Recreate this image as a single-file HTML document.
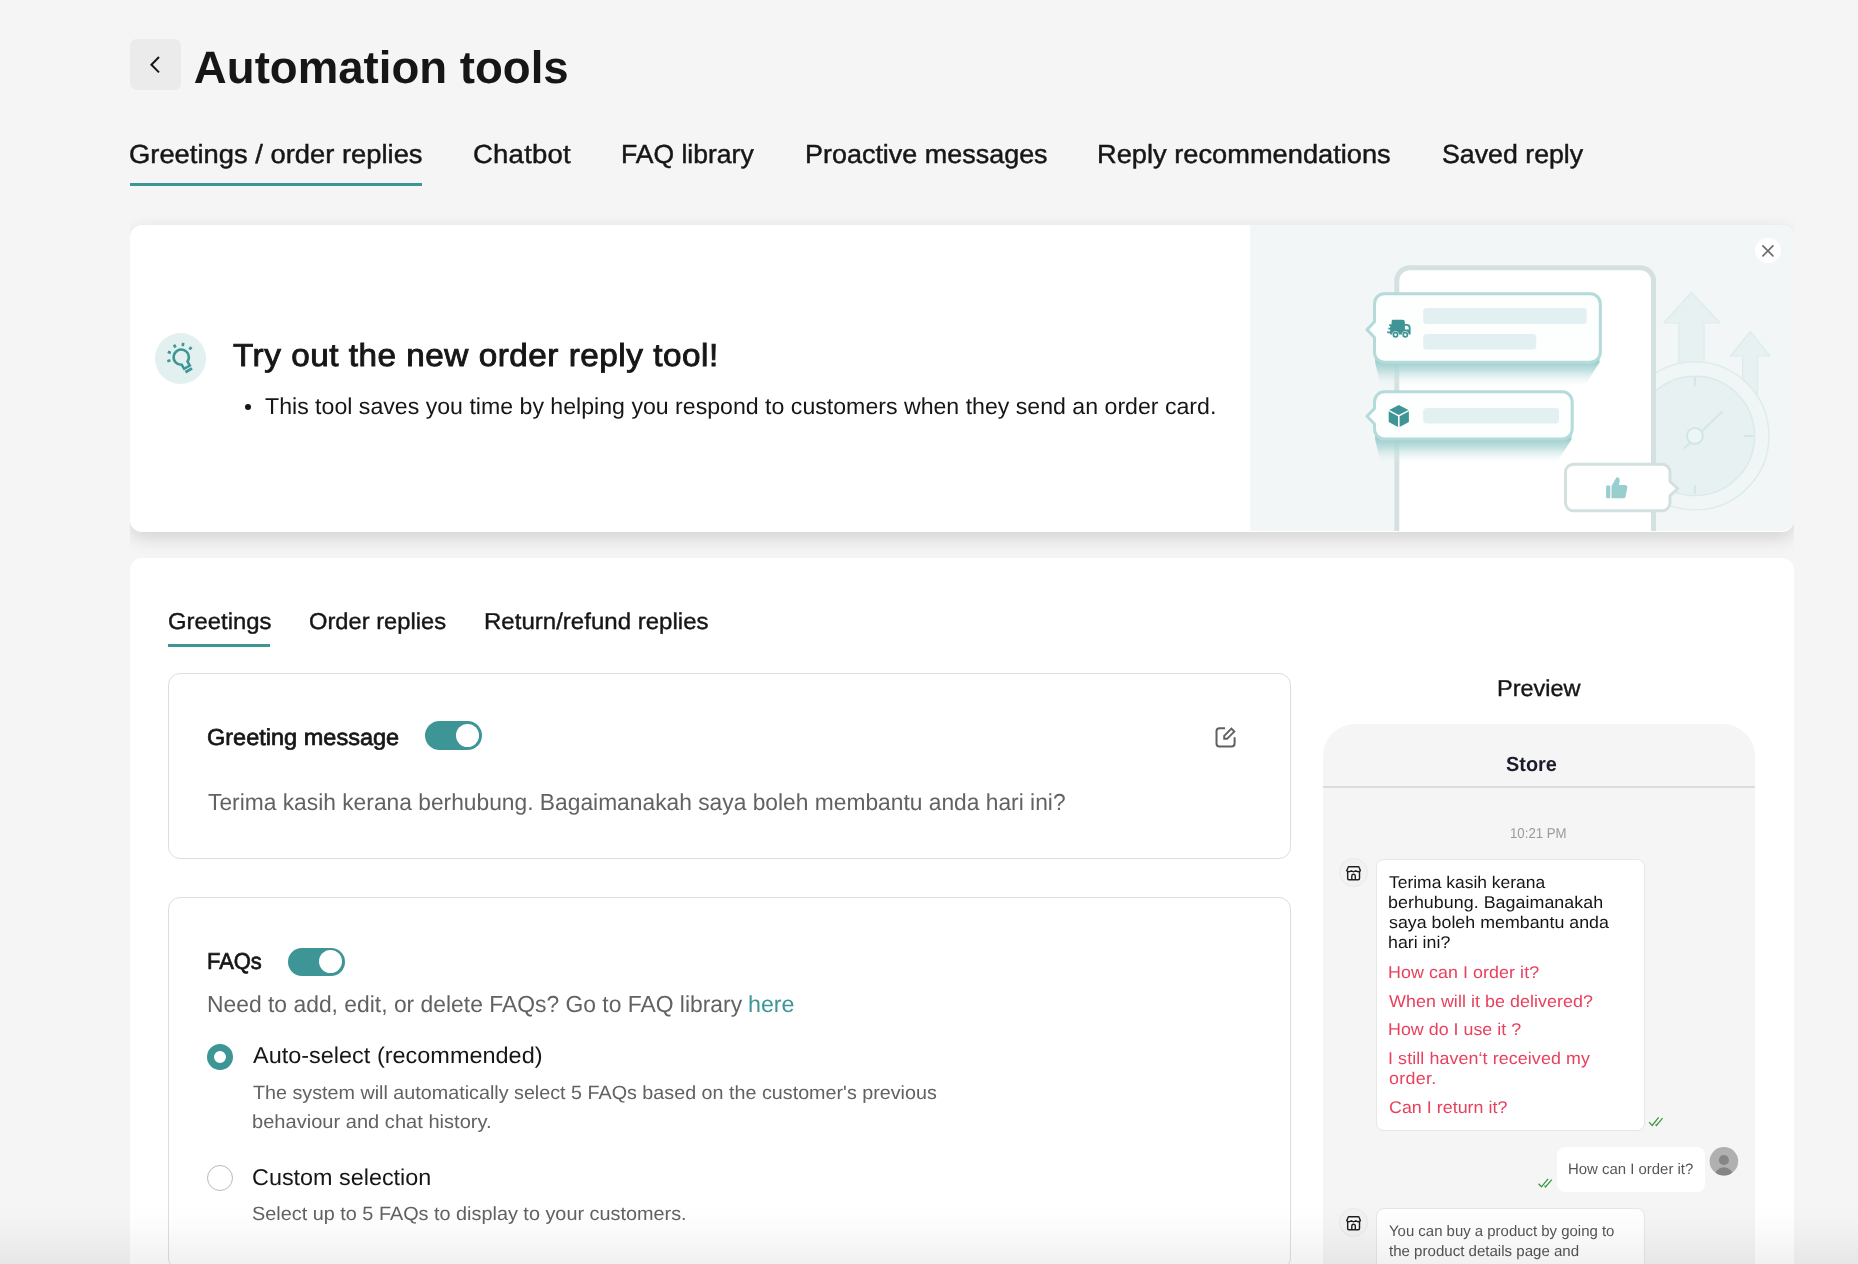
<!DOCTYPE html>
<html lang="en">
<head>
<meta charset="utf-8">
<title>Automation tools</title>
<style>
*{box-sizing:border-box;margin:0;padding:0}
html,body{width:1858px;height:1264px;overflow:hidden;background:#f5f5f5}
body{font-family:"Liberation Sans",sans-serif;color:#161616;position:relative}
.abs{position:absolute}
.t{position:absolute;white-space:nowrap;line-height:1;transform-origin:0 50%;text-rendering:geometricPrecision}
#txt{position:absolute;left:0;top:0;width:1858px;height:1264px;will-change:transform}
#back{left:130px;top:39px;width:51px;height:51px;background:#ebebeb;border-radius:7px}
.line{background:#3d9595;height:3px}
#banner{left:130px;top:225px;width:1664px;height:306px;background:#fff;border-radius:12px;box-shadow:0 6px 14px rgba(0,0,0,.07)}
#clip{left:130px;top:225px;width:1664px;height:306px;border-radius:12px;overflow:hidden}
#main{left:130px;top:558px;width:1664px;height:760px;background:#fff;border-radius:12px}
.card{border:1px solid #dedede;border-radius:12px;background:#fff}
.toggle{width:57px;height:28.7px;border-radius:15px;background:#3d9595}
.toggle i{position:absolute;right:2.9px;top:2.9px;width:22.9px;height:22.9px;border-radius:50%;background:#fff}
.bub{background:#fff;border-radius:8px}
.av{width:29.2px;height:29.2px;border-radius:50%;background:#f2f2f2;border:1px solid #e9e9e9}
</style>
</head>
<body>
<div class="abs" id="back"><svg width="51" height="51" viewBox="0 0 51 51"><path d="M29 18 L21.4 25.7 L29 33.4" fill="none" stroke="#161616" stroke-width="2"/></svg></div>
<div class="abs line" style="left:130px;top:182.7px;width:292px;height:3.5px"></div>

<div class="abs" style="left:130px;top:190px;width:1664px;height:400px;overflow:hidden"><div class="abs" style="left:0;top:35px;width:1664px;height:306.8px;background:#fff;border-radius:12px;box-shadow:0 6px 18px rgba(0,0,0,.14)"></div></div>
<div class="abs" id="clip" style="left:0;top:0;width:1858px;height:1264px;border-radius:0;clip-path:inset(225px 64px 733px 130px round 12px)">
<svg class="abs" style="left:1250px;top:225px" width="544" height="306" viewBox="1250 225 544 306">
<defs>
<linearGradient id="sh1" gradientUnits="userSpaceOnUse" x1="0" y1="362.5" x2="0" y2="386"><stop offset="0" stop-color="#9fcfcf"/><stop offset=".35" stop-color="#b4d9d9" stop-opacity=".78"/><stop offset="1" stop-color="#e6f3f3" stop-opacity="0"/></linearGradient>
<linearGradient id="sh2" gradientUnits="userSpaceOnUse" x1="0" y1="439.5" x2="0" y2="463"><stop offset="0" stop-color="#9fcfcf"/><stop offset=".35" stop-color="#b4d9d9" stop-opacity=".78"/><stop offset="1" stop-color="#e6f3f3" stop-opacity="0"/></linearGradient>
</defs>
<rect x="1250" y="225" width="544" height="306" fill="#f2f6f7"/>
<!-- arrows -->
<g fill="#e8f1f2" stroke="#dcebeb" stroke-width="1.2" stroke-linejoin="round">
<path d="M1691.4 292.4 L1720.1 323 L1704 323 L1704 380 L1678.8 380 L1678.8 323 L1663.9 323 Z"/>
<path d="M1750.4 331.5 L1770 356 L1757.5 356 L1757.5 420 L1742.6 420 L1742.6 356 L1730.5 356 Z"/>
</g>
<!-- clock -->
<circle cx="1694.9" cy="435.9" r="74" fill="#f0f5f6" stroke="#dcebeb" stroke-width="1.4"/>
<circle cx="1694.9" cy="435.9" r="59.7" fill="#e8f1f2" stroke="#d9eaea" stroke-width="1.4"/>
<g stroke="#d3e7e7" stroke-width="2" stroke-linecap="butt">
<line x1="1694.9" y1="377" x2="1694.9" y2="386"/>
<line x1="1694.9" y1="485" x2="1694.9" y2="494"/>
<line x1="1744" y1="435.9" x2="1753.5" y2="435.9"/>
<line x1="1684.1" y1="448.5" x2="1722.4" y2="411.3"/>
</g>
<circle cx="1694.9" cy="435.9" r="8" fill="#edf6f6" stroke="#d0e6e6" stroke-width="2"/>
<!-- phone -->
<rect x="1396.8" y="267.7" width="256.7" height="300" rx="13" fill="#fff" stroke="#d5e1e1" stroke-width="5"/>
<!-- bubble 1 -->
<path d="M1375 352 L1599.5 352 L1599.5 362.5 L1584.5 386 L1380.5 386 L1375.2 362.5 Z" fill="url(#sh1)"/>
<path d="M1384.5 293.7 H1590.3 a10 10 0 0 1 10 10 V352.2 a10 10 0 0 1 -10 10 H1384.5 a10 10 0 0 1 -10 -10 V337.5 L1367 329.6 L1374.5 321.7 V303.7 a10 10 0 0 1 10 -10 Z" fill="#fdfefe" stroke="#b4dada" stroke-width="3" stroke-linejoin="round"/>
<rect x="1423.2" y="308" width="163.6" height="16" rx="3.5" fill="#e3f0f1"/>
<rect x="1423.2" y="333.9" width="113.1" height="15.7" rx="3.5" fill="#e3f0f1"/>
<!-- truck -->
<g fill="#3f9595">
<path d="M1393 319.8 H1402.5 a2.4 2.4 0 0 1 2.4 2.4 V324 H1406.6 a4 4 0 0 1 4 4 V334.6 H1408.6 a3.3 3.3 0 0 0 -6.6 0 H1398.8 a3.3 3.3 0 0 0 -6.6 0 H1390.2 V333.2 H1387.2 V331.4 H1390.2 V329.6 H1388.4 V327.8 H1390.2 V326 H1389.2 V324.2 H1391.6 V321.2 a1.4 1.4 0 0 1 1.4 -1.4 Z M1404.9 325.8 V329.6 H1408.8 V328.2 a2.4 2.4 0 0 0 -2.4 -2.4 Z" fill-rule="evenodd"/>
<circle cx="1395.5" cy="334.7" r="2.1" fill="#fff" stroke="#3f9595" stroke-width="1.7"/><circle cx="1405.3" cy="334.7" r="2.1" fill="#fff" stroke="#3f9595" stroke-width="1.7"/>
</g>
<!-- bubble 2 -->
<path d="M1375 429 L1571.5 429 L1571.5 439.5 L1556.5 463 L1380.5 463 L1375.2 439.5 Z" fill="url(#sh2)"/>
<path d="M1384.5 391.8 H1562.2 a10 10 0 0 1 10 10 V429.1 a10 10 0 0 1 -10 10 H1384.5 a10 10 0 0 1 -10 -10 V424 L1367 416.2 L1374.5 408.4 V401.8 a10 10 0 0 1 10 -10 Z" fill="#fdfefe" stroke="#b4dada" stroke-width="3" stroke-linejoin="round"/>
<rect x="1423.2" y="407.9" width="135.8" height="15.7" rx="3.5" fill="#e3f0f1"/>
<!-- box -->
<g fill="#3f9595">
<path d="M1398.8 405 L1408.4 410 L1398.8 415 L1389.2 410 Z"/>
<path d="M1388.7 411.3 L1398 416.2 V427 L1388.7 422 Z"/>
<path d="M1408.9 411.3 L1399.6 416.2 V427 L1408.9 422 Z"/>
</g>
<!-- thumb bubble -->
<path d="M1573.5 464.2 H1662 a8 8 0 0 1 8 8 V481.5 L1677.8 488.6 L1670 495.7 V502.8 a8 8 0 0 1 -8 8 H1573.5 a8 8 0 0 1 -8 -8 V472.2 a8 8 0 0 1 8 -8 Z" fill="#fff" stroke="#d3e0e0" stroke-width="3" stroke-linejoin="round"/>
<g fill="#99cece">
<rect x="1606.1" y="485.5" width="4.2" height="12.8" rx="1.3"/>
<path d="M1611.5 486 L1616 478.2 a1.6 1.6 0 0 1 2.6 -0.4 c1.2 1.3 1.4 3 .9 4.6 L1618.8 485 H1625 a2.3 2.3 0 0 1 2.3 2.8 L1625.6 496.4 a2.4 2.4 0 0 1 -2.4 1.9 H1611.5 Z"/>
</g>
</svg>

</div>
<div class="abs" style="left:1754.9px;top:237.7px;width:25.8px;height:25.8px;border-radius:50%;background:#fff"><svg width="25.8" height="25.8" viewBox="0 0 25.8 25.8" style="display:block"><path d="M7.9 7.9 L17.9 17.9 M17.9 7.9 L7.9 17.9" stroke="#6c6c6c" stroke-width="1.65" stroke-linecap="round" fill="none"/></svg></div>
<div class="abs" style="left:155px;top:333px;width:51px;height:51px;border-radius:50%;background:#e3f0f0"></div>
<svg class="abs" style="left:155px;top:333px" width="51" height="51" viewBox="155 333 51 51"><g transform="translate(181.2 357.2) rotate(-30)" fill="none" stroke="#3d9595" stroke-width="2.5">
<path d="M-3.3 11.6 V6.9 A7.6 7.6 0 1 1 3.3 6.9 V11.6 Z"/>
<path d="M-3.8 15.1 H3.8" stroke-width="2.8"/>
<path d="M-10.87 -2.71 L-13.97 -3.48 M-6.90 -8.83 L-8.87 -11.35 M0.00 -11.20 L0.00 -14.40 M6.90 -8.83 L8.87 -11.35 M10.87 -2.71 L13.97 -3.48" stroke-width="2.6"/>
</g></svg>
<div class="abs" style="left:245px;top:404px;width:6px;height:6px;border-radius:50%;background:#161616"></div>

<div class="abs" id="main"></div>
<div class="abs line" style="left:168px;top:643.8px;width:102px;height:3.1px"></div>
<div class="abs card" style="left:168px;top:673px;width:1123px;height:186px"></div>
<div class="abs card" style="left:168px;top:897px;width:1123px;height:373px"></div>
<div class="abs toggle" style="left:425px;top:721.2px"><i></i></div>
<div class="abs toggle" style="left:288px;top:947.6px"><i></i></div>
<svg class="abs" style="left:1210px;top:722px" width="32" height="32" viewBox="1210 722 32 32" fill="none" stroke="#606060" stroke-width="2"><path d="M1225 728.3 H1219.5 a3 3 0 0 0 -3 3 V743.6 a3 3 0 0 0 3 3 H1231.6 a3 3 0 0 0 3 -3 V737.3"/><path d="M1224.2 738.8 V735.9 L1231.4 728.7 L1234.3 731.6 L1227.1 738.8 Z" stroke-width="1.9" stroke-linejoin="miter"/></svg>
<div class="abs" style="left:207px;top:1043.5px;width:26px;height:26px;border-radius:50%;border:7.5px solid #3d9595;background:#fff"></div>
<div class="abs" style="left:207px;top:1165px;width:26px;height:26px;border-radius:50%;border:1px solid #b9b9b9;background:#fff"></div>

<!-- phone preview -->
<div class="abs" style="left:1323px;top:724px;width:432px;height:600px;background:#f5f5f5;border-radius:32px 32px 0 0"></div>
<div class="abs" style="left:1323px;top:786px;width:432px;height:2px;background:#dcdcdc"></div>
<div class="abs av" style="left:1338.9px;top:858.3px"></div>
<svg class="abs" style="left:1338px;top:858.0px" width="31" height="31" viewBox="1338 858 31 31" fill="none" stroke="#1f1f1f" stroke-width="1.45" stroke-linejoin="round"><path d="M1347.7 870.6 V878.5 a1.2 1.2 0 0 0 1.2 1.2 H1358.3 a1.2 1.2 0 0 0 1.2 -1.2 V870.6" fill="#fbfbfb"/><path d="M1349 866.7 H1358.2 a1 1 0 0 1 .95 .7 L1360.4 870.7 q-2.28 1.9 -4.56 0 q-2.28 1.9 -4.56 0 q-2.28 1.9 -4.56 0 L1348.05 867.4 a1 1 0 0 1 .95 -.7 Z" fill="#fbfbfb"/><path d="M1351.8 879.7 V876 a1.75 1.75 0 0 1 3.5 0 V879.7"/></svg>
<div class="abs av" style="left:1338.9px;top:1208.2px"></div>
<svg class="abs" style="left:1338px;top:1207.9px" width="31" height="31" viewBox="1338 858 31 31" fill="none" stroke="#1f1f1f" stroke-width="1.45" stroke-linejoin="round"><path d="M1347.7 870.6 V878.5 a1.2 1.2 0 0 0 1.2 1.2 H1358.3 a1.2 1.2 0 0 0 1.2 -1.2 V870.6" fill="#fbfbfb"/><path d="M1349 866.7 H1358.2 a1 1 0 0 1 .95 .7 L1360.4 870.7 q-2.28 1.9 -4.56 0 q-2.28 1.9 -4.56 0 q-2.28 1.9 -4.56 0 L1348.05 867.4 a1 1 0 0 1 .95 -.7 Z" fill="#fbfbfb"/><path d="M1351.8 879.7 V876 a1.75 1.75 0 0 1 3.5 0 V879.7"/></svg>
<div class="abs bub" style="left:1376px;top:859px;width:268.5px;height:271.5px;border:1px solid #e7e7e7"></div>
<div class="abs bub" style="left:1557.3px;top:1147px;width:148.1px;height:44.6px"></div>
<div class="abs bub" style="left:1376px;top:1208px;width:268.5px;height:100px;border:1px solid #e7e7e7"></div>
<svg class="abs" style="left:1646px;top:1114px" width="20" height="16" viewBox="1646 1114 20 16" fill="none" stroke="#3a9a3e" stroke-width="1.3"><path d="M1649.1 1122.1 L1652.2 1125.4 L1658.7 1117.3 M1655.6 1124.5 L1656.4 1125.5 L1662.6 1118.2"/></svg>
<svg class="abs" style="left:1535px;top:1175px" width="20" height="16" viewBox="1535 1175 20 16" fill="none" stroke="#3a9a3e" stroke-width="1.3"><path d="M1538.5 1183.7 L1541.5 1186.8 L1548.1 1178.8 M1544.6 1185.7 L1545.5 1187 L1551.8 1179.6"/></svg>
<svg class="abs" style="left:1709px;top:1146px" width="31" height="31" viewBox="1709 1146 31 31"><defs><clipPath id="uc"><circle cx="1723.9" cy="1161.25" r="14.3"/></clipPath></defs><circle cx="1723.9" cy="1161.25" r="14.3" fill="#b0b0b0"/><g clip-path="url(#uc)" fill="#858585"><circle cx="1723.9" cy="1160" r="5.1"/><ellipse cx="1723.9" cy="1177.3" rx="9.6" ry="10"/></g></svg>

<div id="txt">
<div class="t" style="left:193.86px;top:45.20px;font-size:45.6px;font-weight:700;">Automation tools</div>
<div class="t" style="left:129.02px;top:140.90px;font-size:26.2px;transform:scaleX(1.0450);-webkit-text-stroke:0.45px #161616;">Greetings / order replies</div>
<div class="t" style="left:473.10px;top:140.90px;font-size:26.2px;letter-spacing:0.219px;transform:scaleX(1.0500);-webkit-text-stroke:0.45px #161616;">Chatbot</div>
<div class="t" style="left:621.32px;top:140.90px;font-size:26.2px;transform:scaleX(1.0134);-webkit-text-stroke:0.45px #161616;">FAQ library</div>
<div class="t" style="left:805.29px;top:140.90px;font-size:26.2px;transform:scaleX(1.0288);-webkit-text-stroke:0.45px #161616;">Proactive messages</div>
<div class="t" style="left:1097.36px;top:140.90px;font-size:26.2px;transform:scaleX(1.0402);-webkit-text-stroke:0.45px #161616;">Reply recommendations</div>
<div class="t" style="left:1441.79px;top:140.90px;font-size:26.2px;transform:scaleX(1.0208);-webkit-text-stroke:0.45px #161616;">Saved reply</div>
<div class="t" style="left:232.65px;top:340.20px;font-size:31.7px;letter-spacing:0.496px;transform:scaleX(1.0500);-webkit-text-stroke:0.9px #161616;">Try out the new order reply tool!</div>
<div class="t" style="left:265.08px;top:394.70px;font-size:23px;transform:scaleX(1.0056);">This tool saves you time by helping you respond to customers when they send an order card.</div>
<div class="t" style="left:167.50px;top:609.80px;font-size:23px;transform:scaleX(1.0386);-webkit-text-stroke:0.4px #161616;">Greetings</div>
<div class="t" style="left:308.78px;top:609.80px;font-size:23px;transform:scaleX(1.0312);-webkit-text-stroke:0.4px #161616;">Order replies</div>
<div class="t" style="left:483.63px;top:609.80px;font-size:23px;transform:scaleX(1.0454);-webkit-text-stroke:0.4px #161616;">Return/refund replies</div>
<div class="t" style="left:207.12px;top:725.90px;font-size:23px;transform:scaleX(1.0223);-webkit-text-stroke:0.7px #161616;">Greeting message</div>
<div class="t" style="left:208.29px;top:791.00px;font-size:23.2px;color:#626262;transform:scaleX(0.9827);">Terima kasih kerana berhubung. Bagaimanakah saya boleh membantu anda hari ini?</div>
<div class="t" style="left:207.00px;top:949.90px;font-size:23px;transform:scaleX(0.9526);-webkit-text-stroke:0.7px #161616;">FAQs</div>
<div class="t" style="left:206.92px;top:992.90px;font-size:23.2px;color:#626262;transform:scaleX(0.9862);">Need to add, edit, or delete FAQs? Go to FAQ library</div>
<div class="t" style="left:748.49px;top:992.90px;font-size:23.2px;color:#3d9595;transform:scaleX(1.0027);">here</div>
<div class="t" style="left:253.05px;top:1043.60px;font-size:22.9px;transform:scaleX(1.0250);">Auto-select (recommended)</div>
<div class="t" style="left:252.66px;top:1083.60px;font-size:19.1px;color:#626262;transform:scaleX(1.0336);">The system will automatically select 5 FAQs based on the customer's previous</div>
<div class="t" style="left:251.81px;top:1112.50px;font-size:19.1px;color:#626262;letter-spacing:0.014px;transform:scaleX(1.0500);">behaviour and chat history.</div>
<div class="t" style="left:251.91px;top:1165.50px;font-size:22.9px;transform:scaleX(1.0212);">Custom selection</div>
<div class="t" style="left:252.20px;top:1204.70px;font-size:19.1px;color:#626262;transform:scaleX(1.0394);">Select up to 5 FAQs to display to your customers.</div>
<div class="t" style="left:1496.77px;top:676.80px;font-size:23px;transform:scaleX(1.0215);-webkit-text-stroke:0.4px #161616;">Preview</div>
<div class="t" style="left:1505.73px;top:754.50px;font-size:20.5px;font-weight:700;color:#1b1c2c;transform:scaleX(0.9704);">Store</div>
<div class="t" style="left:1509.99px;top:827.30px;font-size:14.3px;color:#9a9a9a;transform:scaleX(0.9247);">10:21 PM</div>
<div class="t" style="left:1389.11px;top:873.80px;font-size:17.0px;transform:scaleX(1.0267);">Terima kasih kerana</div>
<div class="t" style="left:1388.35px;top:894.10px;font-size:17.0px;letter-spacing:0.032px;transform:scaleX(1.0500);">berhubung. Bagaimanakah</div>
<div class="t" style="left:1389.00px;top:914.20px;font-size:17.0px;transform:scaleX(1.0481);">saya boleh membantu anda</div>
<div class="t" style="left:1388.27px;top:934.20px;font-size:17.0px;transform:scaleX(1.0461);">hari ini?</div>
<div class="t" style="left:1388.04px;top:963.70px;font-size:17.0px;color:#e8405d;letter-spacing:0.069px;transform:scaleX(1.0500);">How can I order it?</div>
<div class="t" style="left:1389.42px;top:993.20px;font-size:17.0px;color:#e8405d;letter-spacing:0.062px;transform:scaleX(1.0500);">When will it be delivered?</div>
<div class="t" style="left:1388.04px;top:1021.20px;font-size:17.0px;color:#e8405d;letter-spacing:0.010px;transform:scaleX(1.0500);">How do I use it ?</div>
<div class="t" style="left:1387.85px;top:1050.00px;font-size:17.0px;color:#e8405d;letter-spacing:0.091px;transform:scaleX(1.0500);">I still haven‘t received my</div>
<div class="t" style="left:1388.75px;top:1070.10px;font-size:17.0px;color:#e8405d;letter-spacing:0.290px;transform:scaleX(1.0500);">order.</div>
<div class="t" style="left:1388.59px;top:1098.70px;font-size:17.0px;color:#e8405d;letter-spacing:0.019px;transform:scaleX(1.0500);">Can I return it?</div>
<div class="t" style="left:1568.28px;top:1161.70px;font-size:15.1px;color:#555;transform:scaleX(0.9889);">How can I order it?</div>
<div class="t" style="left:1389.27px;top:1223.80px;font-size:15.1px;color:#555;transform:scaleX(0.9897);">You can buy a product by going to</div>
<div class="t" style="left:1389.37px;top:1243.70px;font-size:15.1px;color:#555;transform:scaleX(0.9979);">the product details page and</div>
</div>

<div class="abs" style="left:0;top:1204px;width:1858px;height:60px;background:linear-gradient(to bottom,rgba(0,0,0,0),rgba(0,0,0,.012) 35%,rgba(0,0,0,.055))"></div>
</body>
</html>
